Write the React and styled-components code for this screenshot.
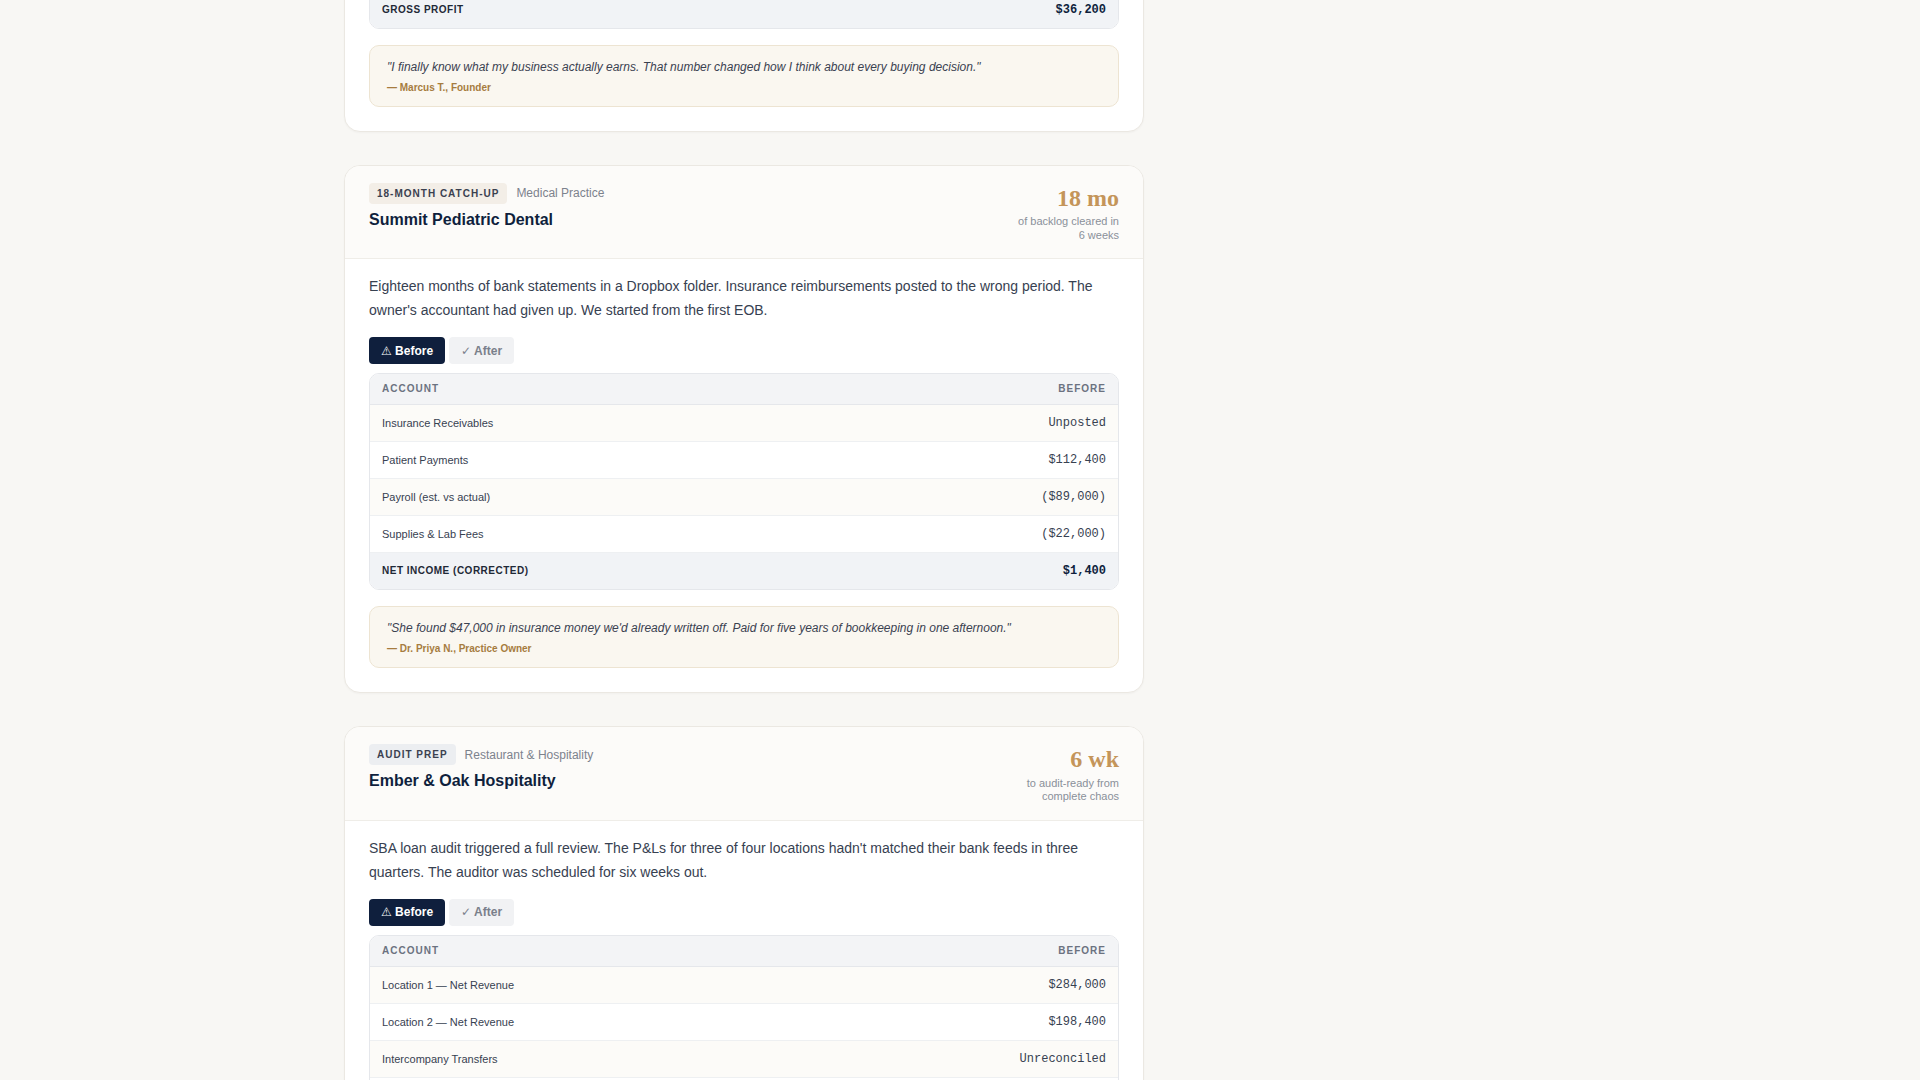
import React, { useState } from "react";
import styled, { createGlobalStyle } from "styled-components";

const GlobalStyle = createGlobalStyle`
  html, body {
    margin: 0;
    padding: 0;
    background: #f8f7f4;
    overflow: hidden;
  }
  body {
    font-family: "Liberation Sans", Arial, "DejaVu Sans", sans-serif;
    color: #1f2937;
  }
`;

const Page = styled.main`
  max-width: 1232px;
  margin: 0 auto;
`;

// the page is shown scrolled part way down the case list
const Feed = styled.div`
  max-width: 800px;
  display: flex;
  flex-direction: column;
  gap: 33px;
  margin-top: -397px;
`;

const Card = styled.article`
  background: #ffffff;
  border: 1px solid #ebe8e2;
  border-radius: 16px;
  overflow: hidden;
  box-shadow: 0 1px 2px rgba(30, 30, 20, 0.03);
`;

const CardHead = styled.header`
  display: flex;
  justify-content: space-between;
  align-items: flex-start;
  padding: 17px 24px 16px;
  background: #fcfbf9;
  border-bottom: 1px solid #efede8;
`;

const TagRow = styled.div`
  display: flex;
  align-items: center;
  gap: 9px;
`;

const Tag = styled.span`
  font-size: 10px;
  font-weight: 700;
  letter-spacing: 0.1em;
  text-transform: uppercase;
  line-height: 11px;
  padding: 5px 8px;
  border-radius: 4px;
  color: #3b4150;
  background: ${p => (p.$tone === "gray" ? "#eceef1" : "#f3eee7")};
`;

const Category = styled.span`
  font-size: 12px;
  color: #7c828d;
`;

const Title = styled.h3`
  margin: 6px 0 0;
  font-size: 16px;
  line-height: 1.3;
  font-weight: 700;
  color: #0f1f3d;
`;

const Stat = styled.div`
  margin-top: 1px;
  text-align: right;
`;

const StatValue = styled.div`
  font-family: "Liberation Serif", "Times New Roman", serif;
  font-size: 24px;
  font-weight: 700;
  line-height: 1.2;
  color: #c4955a;
`;

const StatNote = styled.div`
  max-width: 105px;
  margin: 3px 0 0 auto;
  font-size: 11px;
  line-height: 13.5px;
  color: #8a909a;
`;

const CardBody = styled.div`
  padding: 15px 24px 24px;
`;

const Summary = styled.p`
  margin: 0;
  font-size: 14px;
  line-height: 24px;
  color: #374151;
`;

const Toggle = styled.div`
  display: flex;
  gap: 4px;
  margin: 15px 0 9px;
`;

const ToggleButton = styled.button`
  height: 27px;
  padding: 0 12px;
  border: none;
  border-radius: 4px;
  font-family: "Liberation Sans", Arial, "DejaVu Sans", sans-serif;
  font-size: 12px;
  font-weight: 700;
  cursor: pointer;
  background: ${p => (p.$active ? "#0f1f3d" : "#f1f2f4")};
  color: ${p => (p.$active ? "#ffffff" : "#7a808b")};
`;

const Ledger = styled.div`
  border: 1px solid #e5e7eb;
  border-radius: 10px;
  overflow: hidden;
`;

const LedgerHead = styled.div`
  display: flex;
  justify-content: space-between;
  padding: 10px 12px;
  line-height: 10px;
  font-size: 10px;
  font-weight: 700;
  letter-spacing: 0.1em;
  text-transform: uppercase;
  color: #6b7280;
  background: #f3f4f6;
  border-bottom: 1px solid #e5e7eb;
`;

const LedgerRow = styled.div`
  display: flex;
  justify-content: space-between;
  align-items: center;
  padding: 11px 12px;
  line-height: 14px;
  border-bottom: 1px solid #eef0f2;
  background: ${p => (p.$striped ? "#fcfbf8" : "#ffffff")};
`;

const TotalRow = styled(LedgerRow)`
  border-bottom: none;
  background: #f1f3f6;
`;

const Account = styled.span`
  font-size: 11px;
  color: #374151;
`;

const TotalLabel = styled.span`
  font-size: 10px;
  font-weight: 700;
  letter-spacing: 0.05em;
  text-transform: uppercase;
  color: #1f2937;
`;

const Amount = styled.span`
  font-family: "Liberation Mono", "Courier New", monospace;
  font-size: 12px;
  font-weight: ${p => (p.$bold ? 700 : 400)};
  color: ${p => (p.$bold ? "#0f1f3d" : "#374151")};
`;

const Quote = styled.blockquote`
  margin: 16px 0 0;
  padding: 13px 17px 11px;
  background: #faf7f0;
  border: 1px solid #ede4d2;
  border-radius: 10px;
`;

const QuoteText = styled.p`
  margin: 0;
  font-size: 12px;
  line-height: 1.4;
  font-style: italic;
  color: #3a4250;
`;

const Attribution = styled.div`
  margin-top: 5px;
  font-size: 10px;
  line-height: 14px;
  font-weight: 700;
  color: #a67c3f;
`;

const cases = [
  {
    tag: "Cash to Accrual",
    tone: "warm",
    category: "E-commerce",
    title: "Northline Supply Co.",
    stat: "$36k",
    note: "in margin found in one quarter",
    summary:
      "Revenue was booked when Shopify paid out, not when orders shipped. Inventory lived in a spreadsheet nobody trusted. Margins were a guess every month.",
    rows: [
      ["Product Revenue", "$212,000", "$204,600"],
      ["Cost of Goods Sold", "Estimated", "($168,400)"],
      ["Shipping & Fulfillment", "($18,900)", "($21,300)"],
      ["Payment Processing", "Netted", "($6,100)"]
    ],
    total: ["Gross Profit", "$36,200", "$8,800"],
    quote:
      "\"I finally know what my business actually earns. That number changed how I think about every buying decision.\"",
    author: "— Marcus T., Founder"
  },
  {
    tag: "18-Month Catch-Up",
    tone: "warm",
    category: "Medical Practice",
    title: "Summit Pediatric Dental",
    stat: "18 mo",
    note: "of backlog cleared in 6 weeks",
    summary:
      "Eighteen months of bank statements in a Dropbox folder. Insurance reimbursements posted to the wrong period. The owner's accountant had given up. We started from the first EOB.",
    rows: [
      ["Insurance Receivables", "Unposted", "$47,000"],
      ["Patient Payments", "$112,400", "$112,400"],
      ["Payroll (est. vs actual)", "($89,000)", "($84,650)"],
      ["Supplies & Lab Fees", "($22,000)", "($24,350)"]
    ],
    total: ["Net Income (Corrected)", "$1,400", "$50,400"],
    quote:
      "\"She found $47,000 in insurance money we'd already written off. Paid for five years of bookkeeping in one afternoon.\"",
    author: "— Dr. Priya N., Practice Owner"
  },
  {
    tag: "Audit Prep",
    tone: "gray",
    category: "Restaurant & Hospitality",
    title: "Ember & Oak Hospitality",
    stat: "6 wk",
    note: "to audit-ready from complete chaos",
    summary:
      "SBA loan audit triggered a full review. The P&Ls for three of four locations hadn't matched their bank feeds in three quarters. The auditor was scheduled for six weeks out.",
    rows: [
      ["Location 1 — Net Revenue", "$284,000", "$279,350"],
      ["Location 2 — Net Revenue", "$198,400", "$201,900"],
      ["Intercompany Transfers", "Unreconciled", "$0"],
      ["Location 3 — Net Revenue", "Missing", "$166,200"]
    ],
    total: ["Combined Revenue", "Unknown", "$647,450"],
    quote:
      "\"The auditor said it was the cleanest file she'd seen from a restaurant group all year.\"",
    author: "— Daniel R., Managing Partner"
  }
];

function CaseCard({ item }) {
  const [view, setView] = useState("before");
  const col = view === "before" ? 1 : 2;

  return (
    <Card>
      <CardHead>
        <div>
          <TagRow>
            <Tag $tone={item.tone}>{item.tag}</Tag>
            <Category>{item.category}</Category>
          </TagRow>
          <Title>{item.title}</Title>
        </div>
        <Stat>
          <StatValue>{item.stat}</StatValue>
          <StatNote>{item.note}</StatNote>
        </Stat>
      </CardHead>
      <CardBody>
        <Summary>{item.summary}</Summary>
        <Toggle>
          <ToggleButton $active={view === "before"} onClick={() => setView("before")}>
            ⚠ Before
          </ToggleButton>
          <ToggleButton $active={view === "after"} onClick={() => setView("after")}>
            ✓ After
          </ToggleButton>
        </Toggle>
        <Ledger>
          <LedgerHead>
            <span>Account</span>
            <span>{view === "before" ? "Before" : "After"}</span>
          </LedgerHead>
          {item.rows.map((row, i) => (
            <LedgerRow key={row[0]} $striped={i % 2 === 0}>
              <Account>{row[0]}</Account>
              <Amount>{row[col]}</Amount>
            </LedgerRow>
          ))}
          <TotalRow>
            <TotalLabel>{item.total[0]}</TotalLabel>
            <Amount $bold>{item.total[col]}</Amount>
          </TotalRow>
        </Ledger>
        <Quote>
          <QuoteText>{item.quote}</QuoteText>
          <Attribution>{item.author}</Attribution>
        </Quote>
      </CardBody>
    </Card>
  );
}

export default function App() {
  return (
    <>
      <GlobalStyle />
      <Page>
        <Feed>
          {cases.map(item => (
            <CaseCard key={item.title} item={item} />
          ))}
        </Feed>
      </Page>
    </>
  );
}
